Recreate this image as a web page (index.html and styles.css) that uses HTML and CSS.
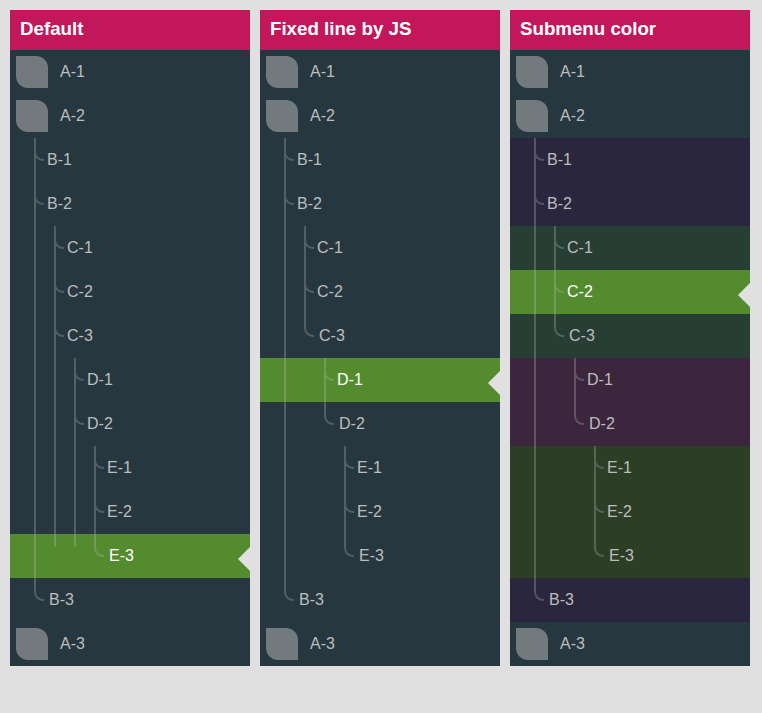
FILE: index.html
```
<!DOCTYPE html>
<html lang="en">
<head>
<meta charset="utf-8">
<title>Tree menu</title>
<link rel="stylesheet" href="styles.css">
</head>
<body>
<nav class="menu">
  <h3>Default</h3>
  <ul class="root">
    <li><a><i class="icon"></i>A-1</a></li>
    <li><a><i class="icon"></i>A-2</a>
      <ul class="sub level-b">
        <li><a>B-1</a></li>
        <li><a>B-2</a>
          <ul class="sub level-c">
            <li><a>C-1</a></li>
            <li><a>C-2</a></li>
            <li class="open"><a>C-3</a>
              <ul class="sub level-d">
                <li><a>D-1</a></li>
                <li class="open"><a>D-2</a>
                  <ul class="sub level-e">
                    <li><a>E-1</a></li>
                    <li><a>E-2</a></li>
                    <li><a class="active">E-3</a></li>
                  </ul>
                </li>
              </ul>
            </li>
          </ul>
        </li>
        <li><a>B-3</a></li>
      </ul>
    </li>
    <li><a><i class="icon"></i>A-3</a></li>
  </ul>
</nav>
<nav class="menu">
  <h3>Fixed line by JS</h3>
  <ul class="root">
    <li><a><i class="icon"></i>A-1</a></li>
    <li><a><i class="icon"></i>A-2</a>
      <ul class="sub level-b">
        <li><a>B-1</a></li>
        <li><a>B-2</a>
          <ul class="sub level-c">
            <li><a>C-1</a></li>
            <li><a>C-2</a></li>
            <li><a>C-3</a>
              <ul class="sub level-d">
                <li><a class="active">D-1</a></li>
                <li><a>D-2</a>
                  <ul class="sub level-e">
                    <li><a>E-1</a></li>
                    <li><a>E-2</a></li>
                    <li><a>E-3</a></li>
                  </ul>
                </li>
              </ul>
            </li>
          </ul>
        </li>
        <li><a>B-3</a></li>
      </ul>
    </li>
    <li><a><i class="icon"></i>A-3</a></li>
  </ul>
</nav>
<nav class="menu tinted">
  <h3>Submenu color</h3>
  <ul class="root">
    <li><a><i class="icon"></i>A-1</a></li>
    <li><a><i class="icon"></i>A-2</a>
      <ul class="sub level-b">
        <li><a>B-1</a></li>
        <li><a>B-2</a>
          <ul class="sub level-c">
            <li><a>C-1</a></li>
            <li><a class="active">C-2</a></li>
            <li><a>C-3</a>
              <ul class="sub level-d">
                <li><a>D-1</a></li>
                <li><a>D-2</a>
                  <ul class="sub level-e">
                    <li><a>E-1</a></li>
                    <li><a>E-2</a></li>
                    <li><a>E-3</a></li>
                  </ul>
                </li>
              </ul>
            </li>
          </ul>
        </li>
        <li><a>B-3</a></li>
      </ul>
    </li>
    <li><a><i class="icon"></i>A-3</a></li>
  </ul>
</nav>
</body>
</html>
```
FILE: styles.css
```
*,
*::before,
*::after { box-sizing: border-box; }

body {
  display: flex;
  align-items: flex-start;
  gap: 10px;
  margin: 0;
  padding: 10px;
  background: #e0e0e0;
  font: 16px/44px "Liberation Sans", Arial, sans-serif;
}

.menu {
  --line: rgba(189, 189, 189, .3);
  flex: 0 0 240px;
  background: #263740;
  color: #bdbdbd;
}

.menu h3 {
  height: 40px;
  margin: 0;
  padding: 0 10px;
  background: #c2185b;
  color: #fff;
  font-size: 18.72px;
  line-height: 38px;
}

.menu ul {
  margin: 0;
  padding: 0;
  list-style: none;
}

.menu li { position: relative; }

.menu a {
  display: flex;
  align-items: center;
  position: relative;
  height: 44px;
  padding-left: 6px;
}

.icon {
  width: 32px;
  height: 32px;
  margin-right: 12px;
  border-radius: 0 12px 0 12px;
  background: #737a7d;
}

/* Each level sets the x position of its connector line */
.level-b { --x: 24px; }
.level-c { --x: 44px; }
.level-d { --x: 64px; }
.level-e { --x: 84px; }

.menu .sub a { padding-left: calc(var(--x) + 13px); }
.menu .sub li:last-child:not(.open) > a { padding-left: calc(var(--x) + 15px); }

/* Vertical line */
.sub > li::before {
  content: "";
  position: absolute;
  z-index: 1;
  top: 0;
  bottom: 0;
  left: var(--x);
  width: 2px;
  background: var(--line);
}

.sub > li.open::before { bottom: 31px; }

/* Branch hook, clipped where the vertical line already covers it */
.sub > li::after {
  content: "";
  position: absolute;
  z-index: 1;
  top: 0;
  left: var(--x);
  width: 10px;
  height: 23px;
  border: solid var(--line);
  border-width: 0 0 2px 2px;
  border-bottom-left-radius: 9px;
  clip-path: inset(0 0 0 2px);
}

/* The last item closes the line with a rounded corner */
.sub > li:last-child:not(.open)::before {
  bottom: auto;
  width: 10px;
  height: 23px;
  border: solid var(--line);
  border-width: 0 0 2px 2px;
  border-bottom-left-radius: 9px;
  background: none;
}

.sub > li:last-child:not(.open)::after { content: none; }

.menu .active {
  background: #558b2f;
  color: #fff;
}

.active::after {
  content: "";
  position: absolute;
  top: 13px;
  right: 0;
  border: solid transparent;
  border-width: 12px 12px 12px 0;
  border-right-color: #e0e0e0;
}

.tinted .level-b { background: #29263e; }
.tinted .level-c { background: #263e34; }
.tinted .level-d { background: #3b263e; }
.tinted .level-e { background: #2c3e26; }
```
